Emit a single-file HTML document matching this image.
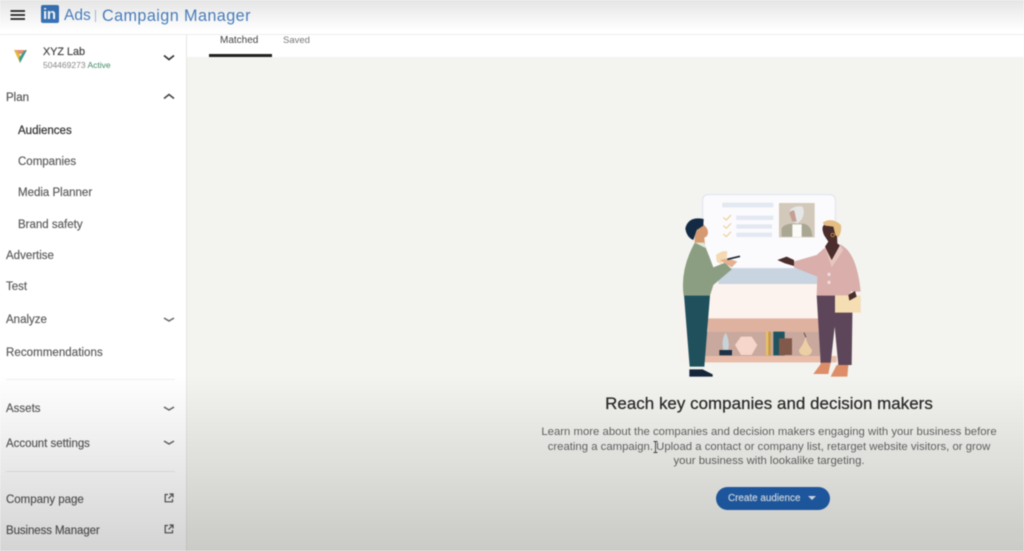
<!DOCTYPE html>
<html lang="en"><head><meta charset="utf-8"><title>Campaign Manager</title>
<style>
*{box-sizing:border-box}
html,body{margin:0;padding:0;width:1024px;height:551px;overflow:hidden;background:#fff}
body{font-family:"Liberation Sans",sans-serif;position:relative}
#w{position:absolute;inset:0;filter:blur(.4px)}
.t{position:absolute;white-space:nowrap;line-height:16px}
.n{font-size:11.5px;color:#5e5e5e;left:6px;font-weight:400;-webkit-text-stroke:.2px #5e5e5e}
.s{left:18px}
.c{position:absolute;left:163px;width:12px;height:7px}
.p{position:absolute;left:0;width:1024px;text-align:center}
svg{position:absolute;overflow:visible}
</style></head><body><div id="w">
<div style="position:absolute;left:186px;top:57px;width:838px;height:494px;background:#f3f3ef"></div>
<div style="position:absolute;left:186px;top:34px;width:1px;height:517px;background:#e6e6e3"></div>
<div style="position:absolute;left:0;top:34px;width:1024px;height:1px;background:#ececec"></div>

<svg style="left:10px;top:10px" width="16" height="10"><path d="M.5 1H15M.5 5H15M.5 9H15" stroke="#222" stroke-width="1.7" fill="none"/></svg>
<div style="position:absolute;left:41px;top:5px;width:18px;height:18px;background:#3a76bd;border-radius:2px"></div>
<div class="t" style="left:43px;top:7px;font-size:15px;font-weight:700;color:#fff;letter-spacing:-.3px">in</div>
<div class="t" style="left:64px;top:6px;font-size:15.5px;line-height:20px;color:#4d83c4">Ads</div>
<div style="position:absolute;left:95px;top:10px;width:1px;height:12px;background:#a9bfd8"></div>
<div class="t" style="left:102px;top:6px;font-size:16.2px;line-height:20px;color:#4d83c4;letter-spacing:.42px">Campaign Manager</div>

<div class="t" style="left:220px;top:34px;font-size:10px;color:#444;line-height:14px;padding-top:0">Matched</div>
<div class="t" style="left:283px;top:34px;font-size:9.5px;color:#777;line-height:14px">Saved</div>
<div style="position:absolute;left:209px;top:54px;width:63px;height:3px;background:#222"></div>

<svg style="left:13px;top:49px" width="15" height="15" viewBox="0 0 15 15"><path d="M1 1H14L11.5 5H3.5Z" fill="#e58f73"/><path d="M1 1L7 14L9 9L4 2Z" fill="#e5b83c"/><path d="M14 1L7 14L6 9L11 2Z" fill="#3d9a8e"/></svg>
<div class="t" style="left:43px;top:44px;font-size:10.8px;color:#444;-webkit-text-stroke:.2px #444">XYZ Lab</div>
<div class="t" style="left:43px;top:57px;font-size:8.5px;color:#888">504469273 <span style="color:#3f8a68">Active</span></div>
<svg class="c" style="top:54px" viewBox="0 0 12 7"><path d="M1 1.5L6 5.5L11 1.5" stroke="#333" stroke-width="1.7" fill="none"/></svg>

<div class="t n" style="top:90px;color:#555">Plan</div>
<svg class="c" style="top:93px" viewBox="0 0 12 7"><path d="M1 5.5L6 1.5L11 5.5" stroke="#444" stroke-width="1.6" fill="none"/></svg>
<div class="t n s" style="top:123px;color:#3c3c3c;-webkit-text-stroke:.3px #3c3c3c">Audiences</div>
<div class="t n s" style="top:154px">Companies</div>
<div class="t n s" style="top:185px">Media Planner</div>
<div class="t n s" style="top:217px">Brand safety</div>
<div class="t n" style="top:248px">Advertise</div>
<div class="t n" style="top:279px">Test</div>
<div class="t n" style="top:312px">Analyze</div>
<svg class="c" style="top:316px" viewBox="0 0 12 7"><path d="M1 2L6 5L11 2" stroke="#666" stroke-width="1.5" fill="none"/></svg>
<div class="t n" style="top:345px;letter-spacing:.06px">Recommendations</div>
<div style="position:absolute;left:6px;top:379px;width:169px;height:1px;background:#f0f0f0"></div>
<div class="t n" style="top:401px">Assets</div>
<svg class="c" style="top:405px" viewBox="0 0 12 7"><path d="M1 2L6 5L11 2" stroke="#666" stroke-width="1.5" fill="none"/></svg>
<div class="t n" style="top:436px;letter-spacing:-.03px">Account settings</div>
<svg class="c" style="top:439px" viewBox="0 0 12 7"><path d="M1 2L6 5L11 2" stroke="#666" stroke-width="1.5" fill="none"/></svg>
<div style="position:absolute;left:6px;top:471px;width:169px;height:1px;background:#ececec"></div>
<div class="t n" style="top:492px;letter-spacing:-.02px">Company page</div>
<div class="t n" style="top:523px;letter-spacing:-.1px">Business Manager</div>
<svg style="left:164px;top:493px" width="10" height="10" viewBox="0 0 10 10"><path d="M4 1.5H1.2V8.8H8.5V6M5.5 1H9V4.5M9 1L4.5 5.5" stroke="#555" stroke-width="1.2" fill="none"/></svg>
<svg style="left:164px;top:524px" width="10" height="10" viewBox="0 0 10 10"><path d="M4 1.5H1.2V8.8H8.5V6M5.5 1H9V4.5M9 1L4.5 5.5" stroke="#555" stroke-width="1.2" fill="none"/></svg>

<svg style="left:660px;top:180px;filter:blur(.3px)" width="220" height="200" viewBox="0 0 660 600">
<path d="M60 312H600V545H60Z" fill="#f8f2ed" opacity=".6"/>
<path d="M150 312H480V415H150Z" fill="#fcf3ee"/>
<path d="M128 62Q128 44 146 44H508Q526 44 526 62V265H128Z" fill="#fbfbfd" stroke="#dfe3ef" stroke-width="3"/>
<path d="M175 265H480V312H175Z" fill="#c9d4e1"/>
<path d="M187 68H340V82H187ZM229 107H340V120H229ZM229 133H336V146H229ZM229 158H336V171H229Z" fill="#e3e8f1"/>
<path d="M190 112L199 120L213 105M190 137L199 145L213 130M190 162L199 170L213 155" stroke="#ecc988" stroke-width="3" fill="none"/>
<path d="M357 69H464V172H357Z" fill="#d2c9bb"/>
<path d="M365 170V145Q372 133 395 131H430Q455 135 457 170Z" fill="#a9a692"/>
<path d="M397 133H425V171H397Z" fill="#fbfbf8"/>
<path d="M390 90Q405 75 428 80Q436 100 425 118L412 131L398 125Z" fill="#e5e7e6"/>
<path d="M388 100Q395 88 403 92L410 125L397 125Z" fill="#c59f93"/>
<path d="M143 415H478V455H143Z" fill="#dfb2a0"/>
<path d="M135 455H480V528H135Z" fill="#c9a89d"/>
<path d="M133 528H530V547H133Z" fill="#e8bca9"/>
<path d="M178 510H216V526H178Z" fill="#1d3245"/>
<path d="M197 458Q210 480 205 510H190Q183 480 197 458Z" fill="#c8d3d9"/>
<path d="M225 495L243 470H275L292 495L275 525H243Z" fill="#f6d6ca"/>
<path d="M318 455H325V526H318Z" fill="#eac266"/>
<path d="M325 455H332V526H325Z" fill="#c89a3e"/>
<path d="M340 455H374V526H340Z" fill="#1d5460"/>
<path d="M357 475H396V525H357Z" fill="#80594a"/>
<path d="M437 470Q440 490 456 510Q456 526 437 527Q417 526 417 510Q432 490 437 470Z" fill="#eccfa5"/>
<path d="M432 458L438 472" stroke="#6e4a3e" stroke-width="3"/>
<path d="M72 345H150L133 560H89Z" fill="#1f505b"/>
<path d="M88 568H128L158 583V590H88Z" fill="#16263a"/>
<path d="M104 170L132 165L135 195L104 195Z" fill="#d69a72"/>
<path d="M100 130Q130 122 143 150Q148 172 125 175L105 170Z" fill="#d69a72"/>
<path d="M131 117Q85 108 76 145Q80 172 100 180L110 150L130 137Z" fill="#132a44"/>
<path d="M103 190L132 190L150 235L160 262L195 248L215 268L160 315L150 347H71Q60 270 103 190Z" fill="#8b9e82"/>
<path d="M105 188L132 188L140 205L128 200Z" fill="#dfe8d8"/>
<path d="M168 225Q190 208 202 215L200 235L182 252L170 245Z" fill="#f5d9b3"/>
<path d="M180 240L205 235L232 245L215 262L195 250Z" fill="#e4b08f"/>
<path d="M202 238L240 229" stroke="#1c2730" stroke-width="5"/>
<path d="M470 345H578L575 555H535L524 440L512 550H482Z" fill="#5d4659"/>
<path d="M485 548H512L505 582H460Z" fill="#dd8e68"/>
<path d="M530 555H565L562 590H512Z" fill="#dd8e68"/>
<path d="M492 205L540 193Q590 215 602 335L570 335L578 347H470L472 290L402 262L400 245L470 225Z" fill="#d9aeab"/>
<path d="M352 240L380 230L402 240L402 258L375 250Z" fill="#4a2d2c"/>
<path d="M492 165Q480 135 500 130L530 140L532 190L540 197L515 240L495 200L505 185Z" fill="#4a2d2c"/>
<path d="M495 203L515 242L540 195L550 210L515 262Z" fill="#e8c5be"/>
<circle cx="507" cy="283" r="5" fill="#efdadc"/><circle cx="507" cy="307" r="5" fill="#efdadc"/>
<path d="M525 346H602V398H525Z" fill="#f5deb4"/>
<path d="M565 345L585 333L590 350L568 362Z" fill="#4a2d2c"/>
<path d="M488 128Q515 110 543 135Q546 155 535 172L526 165L520 140L495 137Z" fill="#e4bd82"/>
<circle cx="518" cy="165" r="5" fill="none" stroke="#d9a648" stroke-width="2"/>
</svg>

<div class="p" style="left:257px;top:394px;font-size:16.9px;line-height:20px;color:#2b2b2b;-webkit-text-stroke:.25px #2b2b2b;letter-spacing:.05px">Reach key companies and decision makers</div>
<div class="p" style="left:257px;top:425px;font-size:11.35px;line-height:14.6px;color:#666">Learn more about the companies and decision makers engaging with your business before<br>creating a campaign. Upload a contact or company list, retarget website visitors, or grow<br>your business with lookalike targeting.</div>
<svg style="left:653px;top:441px" width="5" height="12" viewBox="0 0 5 12"><path d="M.5.5H4.5M2.5.5V11.5M.5 11.5H4.5" stroke="#444" stroke-width=".9" fill="none"/></svg>
<div style="position:absolute;left:716px;top:487px;width:114px;height:23px;border-radius:12px;background:#2161b0"></div>
<div class="t" style="left:728px;top:491px;font-size:9.9px;color:#e6eef8;-webkit-text-stroke:.15px #e6eef8">Create audience</div>
<svg style="left:808px;top:496px" width="8" height="5"><path d="M0 0H8L4 4Z" fill="#e6eef8"/></svg>

<div style="position:absolute;left:0;top:0;width:1024px;height:34px;background:linear-gradient(rgba(0,0,0,.1),rgba(0,0,0,0) 90%);pointer-events:none"></div>
<div style="position:absolute;left:0;top:375px;width:1024px;height:176px;background:linear-gradient(rgba(0,0,0,0),rgba(0,0,0,.06) 35%,rgba(0,0,0,.17));pointer-events:none"></div>
</div></body></html>
